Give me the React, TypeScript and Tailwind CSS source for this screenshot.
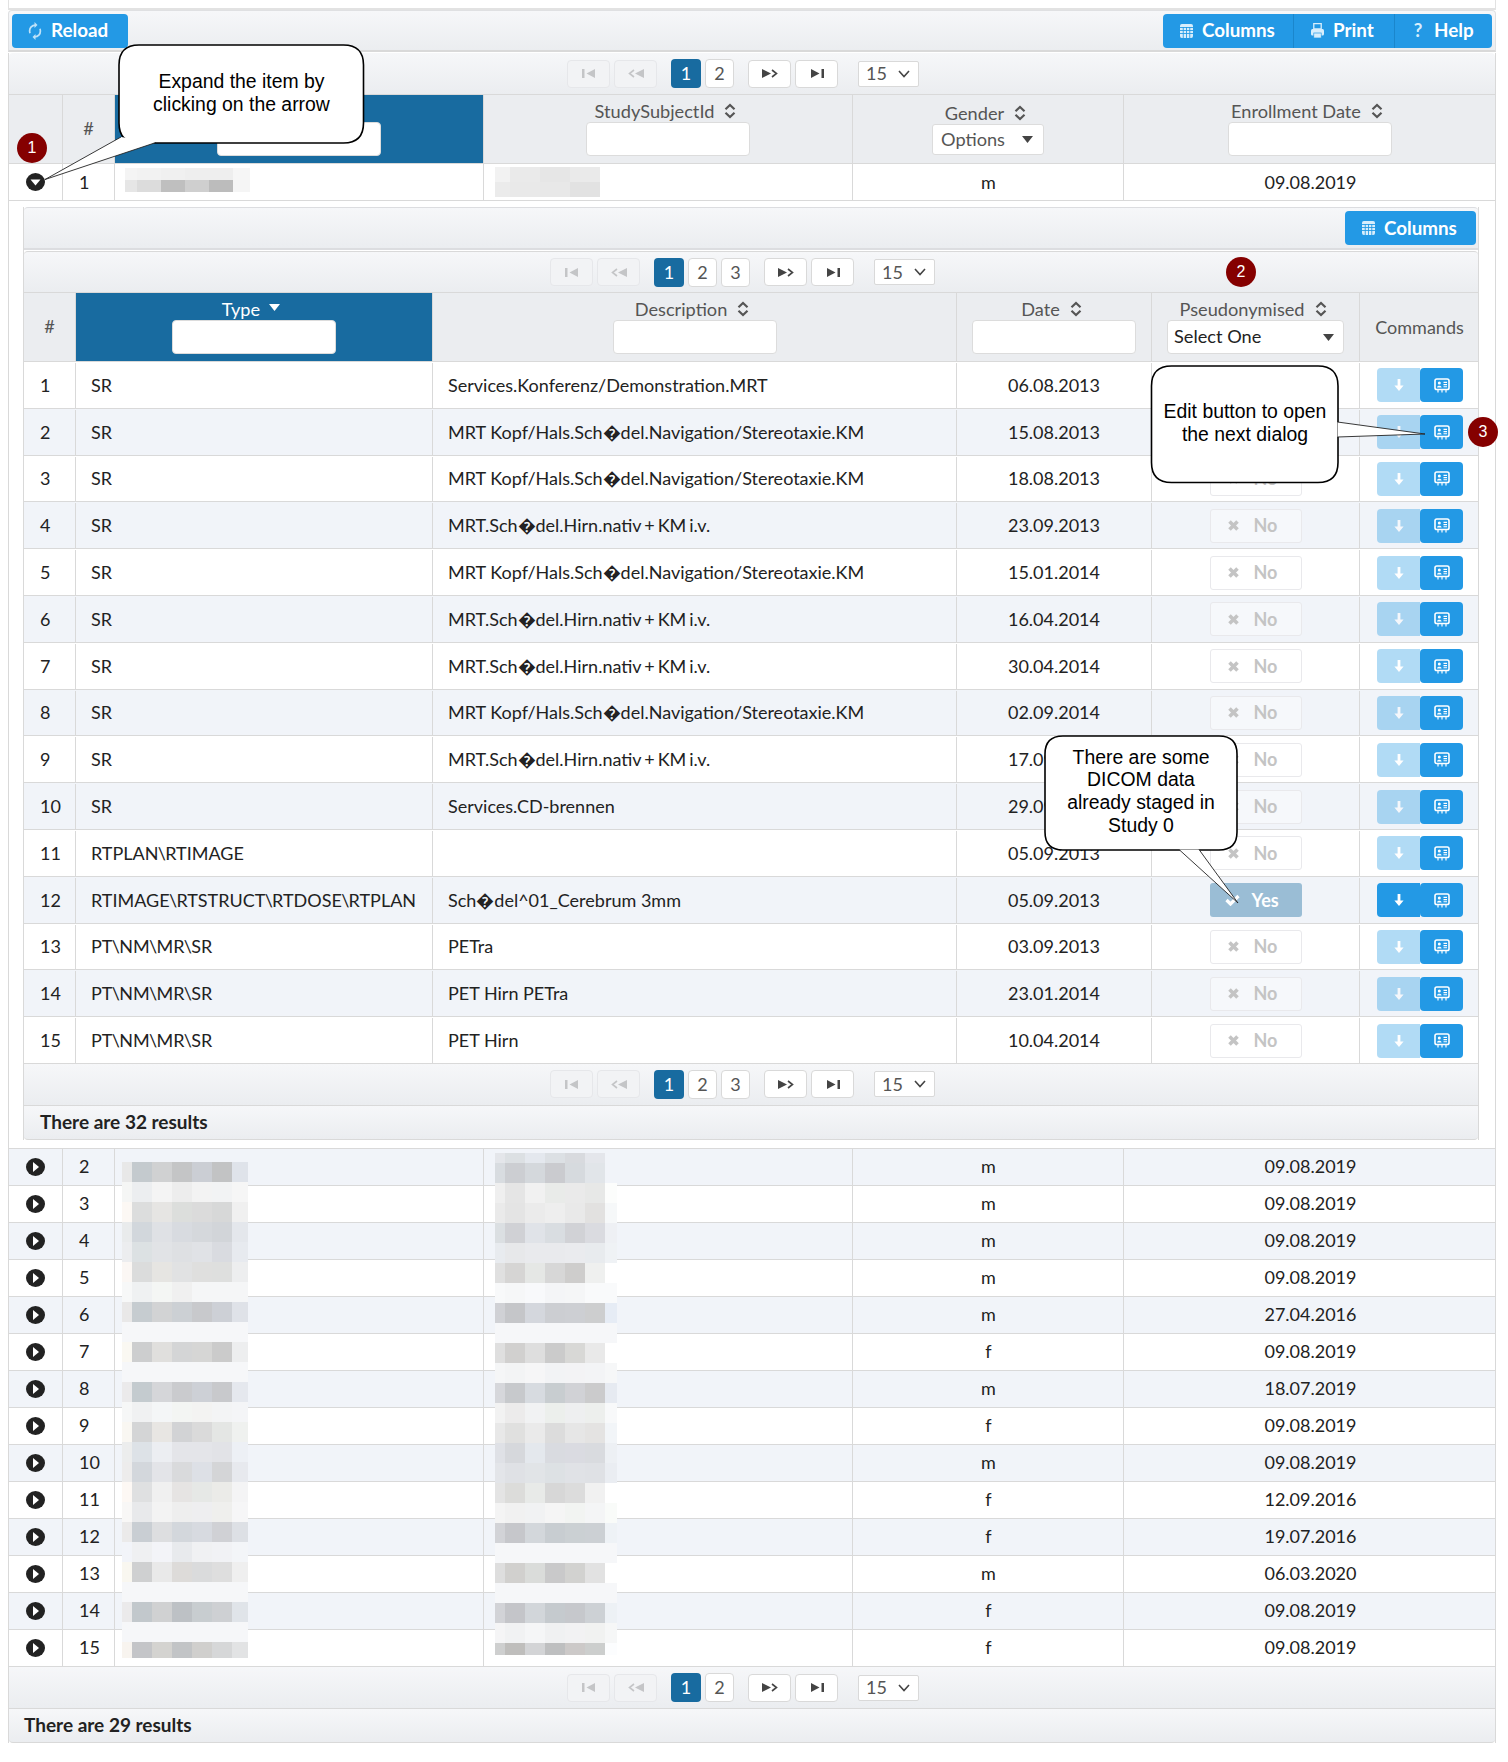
import React from "react";

const font = { fontFamily: "Lato, sans-serif" };

const Sort = () => (
  <svg width="12" height="16" viewBox="0 0 12 16" className="ml-[10px] shrink-0" fill="none" stroke="#555" strokeWidth="2.2">
    <path d="M1.5 6.2 L6 2 L10.5 6.2" />
    <path d="M1.5 9.8 L6 14 L10.5 9.8" />
  </svg>
);

const Caret = ({ color = "#555" }: { color?: string }) => (
  <svg width="11" height="7" viewBox="0 0 11 7" className="shrink-0"><path d="M0 0 H11 L5.5 7 Z" fill={color} /></svg>
);

const IconFirst = ({ c }: { c: string }) => (
  <svg width="14" height="9" viewBox="0 0 14 9"><rect x="0" y="0" width="2.5" height="9" fill={c} /><path d="M13 0 V9 L4.5 4.5 Z" fill={c} /></svg>
);
const IconPrev = ({ c }: { c: string }) => (
  <svg width="16" height="9" viewBox="0 0 16 9"><path d="M6 1 L1.5 4.5 L6 8" stroke={c} strokeWidth="1.6" fill="none" /><path d="M16 0 V9 L7 4.5 Z" fill={c} /></svg>
);
const IconNext = ({ c }: { c: string }) => (
  <svg width="16" height="9" viewBox="0 0 16 9"><path d="M0 0 V9 L9 4.5 Z" fill={c} /><path d="M10 1 L14.5 4.5 L10 8" stroke={c} strokeWidth="1.6" fill="none" /></svg>
);
const IconLast = ({ c }: { c: string }) => (
  <svg width="14" height="9" viewBox="0 0 14 9"><path d="M1 0 V9 L9.5 4.5 Z" fill={c} /><rect x="11.5" y="0" width="2.5" height="9" fill={c} /></svg>
);

const NavBtn = ({ children, disabled }: { children: React.ReactNode; disabled?: boolean }) => (
  <div className={`w-[43px] h-[28px] rounded-[4px] border flex items-center justify-center ${disabled ? "border-[#e6e7ea] bg-[#f2f3f5]" : "border-[#d9d9d9] bg-white"}`}>
    {children}
  </div>
);

const Pager = ({ pages, pr = "pr-[18px]" }: { pages: number; pr?: string }) => (
  <div className={`flex items-center justify-center h-full ${pr}`}>
    <div className="flex gap-[4px]">
      <NavBtn disabled><IconFirst c="#c4c5c7" /></NavBtn>
      <NavBtn disabled><IconPrev c="#c4c5c7" /></NavBtn>
    </div>
    <div className="flex gap-[4px] ml-[14px]">
      {Array.from({ length: pages }, (_, i) => (
        <div key={i} className={`h-[29px] rounded-[4px] flex items-center justify-center text-[18px] ${i === 0 ? "w-[30px] bg-[#186ba0] text-white" : "w-[29px] bg-white border border-[#d9d9d9] text-[#555]"}`}>
          {i + 1}
        </div>
      ))}
    </div>
    <div className="flex gap-[4px] ml-[14px]">
      <NavBtn><IconNext c="#444" /></NavBtn>
      <NavBtn><IconLast c="#444" /></NavBtn>
    </div>
    <div className="ml-[20px] w-[61px] h-[26px] bg-white border border-[#d9d9d9] rounded-[2px] flex items-center pl-[7px] text-[18px] text-[#555]">
      15
      <svg width="12" height="8" viewBox="0 0 12 8" className="ml-[11px]" fill="none" stroke="#444" strokeWidth="1.6"><path d="M1 1 L6 6.5 L11 1" /></svg>
    </div>
  </div>
);

const IconRefresh = () => (
  <svg width="14" height="20" viewBox="0 0 14 18" preserveAspectRatio="none" fill="none" stroke="#bfe2f8" strokeWidth="1.7">
    <path d="M2 11 C0.5 6.5 4 3.5 8 3.7" />
    <path d="M6.5 1 L9.5 3.7 L6.5 6.2" fill="#bfe2f8" stroke="none" />
    <path d="M12 7 C13.5 11.5 10 14.5 6 14.3" />
    <path d="M7.5 17 L4.5 14.3 L7.5 11.8" fill="#bfe2f8" stroke="none" />
  </svg>
);
const IconTable = () => (
  <svg width="13" height="14" viewBox="0 0 14 14" preserveAspectRatio="none">
    <rect width="14" height="14" rx="2" fill="#d8eefc" />
    <path d="M0 3.5 H14 M0 6.5 H14 M0 9.5 H14 M3.5 3 V14 M7 3 V14 M10.5 3 V14" stroke="#2399e5" strokeWidth="0.9" />
  </svg>
);
const IconPrint = () => (
  <svg width="13" height="15" viewBox="0 0 14 15" preserveAspectRatio="none">
    <path d="M3 0.5 H11 V6 H3 Z" fill="none" stroke="#d8eefc" strokeWidth="1.4" />
    <rect x="0" y="6" width="14" height="6.5" rx="1.5" fill="#d8eefc" />
    <rect x="3" y="10" width="8" height="5" fill="#d8eefc" stroke="#2399e5" strokeWidth="0.7" />
  </svg>
);

const Btn = ({ w, icon, label, cls = "" }: { w: string; icon: React.ReactNode; label: string; cls?: string }) => (
  <div className={`${w} ${cls} h-[34px] bg-[#2399e5] flex items-center pl-[16px] text-white font-bold text-[18.8px]`}>
    <span className="w-[14px] flex justify-center shrink-0">{icon}</span>
    <span className="ml-[9px]">{label}</span>
  </div>
);

const TextInput = ({ w }: { w: string }) => (
  <div className={`${w} h-[34px] bg-white border border-[#dcdcdc] rounded-[4px]`} />
);

const ArrowDown = () => (
  <svg width="10" height="12" viewBox="0 0 10 12"><path d="M3.6 0 H6.4 V6.5 H9.6 L5 12 L0.4 6.5 H3.6 Z" fill="#fff" /></svg>
);
const Contact = () => (
  <svg width="16" height="15" viewBox="0 0 16 15">
    <rect x="1" y="1" width="14" height="10.5" rx="1.8" fill="none" stroke="#fff" strokeWidth="1.6" />
    <circle cx="5.3" cy="5" r="1.5" fill="#fff" />
    <path d="M3 9.5 C3 7 7.6 7 7.6 9.5 Z" fill="#fff" />
    <path d="M9.5 4.4 H13 M9.5 6.6 H13 M9.5 8.8 H13" stroke="#fff" strokeWidth="1.1" />
    <path d="M4 11 V14.5 M8 11 V14.5 M12 11 V14.5" stroke="#fff" strokeWidth="1.2" />
  </svg>
);

const PseudoBtn = ({ yes }: { yes?: boolean }) =>
  yes ? (
    <div className="w-[92px] h-[34px] rounded-[3px] bg-[#186ba0]/40 flex items-center pl-[15px] text-white font-bold text-[18px]">
      <svg width="15" height="12" viewBox="0 0 15 12" fill="none" stroke="#fff" strokeWidth="3.2"><path d="M1.5 6 L5.5 10 L13.5 2" /></svg>
      <span className="ml-[12px]">Yes</span>
    </div>
  ) : (
    <div className="w-[92px] h-[34px] rounded-[3px] bg-white/40 border border-[#e9e9ec] flex items-center pl-[17px] text-[#c4c4c4] font-bold text-[18px]">
      <svg width="11" height="11" viewBox="0 0 11 11" stroke="#c4c4c4" strokeWidth="3.6"><path d="M1.5 1.5 L9.5 9.5 M9.5 1.5 L1.5 9.5" /></svg>
      <span className="ml-[15px]">No</span>
    </div>
  );

const nested: [string, string, string, boolean?][] = [
  ["SR", "Services.Konferenz/Demonstration.MRT", "06.08.2013"],
  ["SR", "MRT Kopf/Hals.Sch\uFFFDdel.Navigation/Stereotaxie.KM", "15.08.2013"],
  ["SR", "MRT Kopf/Hals.Sch\uFFFDdel.Navigation/Stereotaxie.KM", "18.08.2013"],
  ["SR", "MRT.Sch\uFFFDdel.Hirn.nativ + KM i.v.", "23.09.2013"],
  ["SR", "MRT Kopf/Hals.Sch\uFFFDdel.Navigation/Stereotaxie.KM", "15.01.2014"],
  ["SR", "MRT.Sch\uFFFDdel.Hirn.nativ + KM i.v.", "16.04.2014"],
  ["SR", "MRT.Sch\uFFFDdel.Hirn.nativ + KM i.v.", "30.04.2014"],
  ["SR", "MRT Kopf/Hals.Sch\uFFFDdel.Navigation/Stereotaxie.KM", "02.09.2014"],
  ["SR", "MRT.Sch\uFFFDdel.Hirn.nativ + KM i.v.", "17.09.2014"],
  ["SR", "Services.CD-brennen", "29.09.2014"],
  ["RTPLAN\\RTIMAGE", "", "05.09.2013"],
  ["RTIMAGE\\RTSTRUCT\\RTDOSE\\RTPLAN", "Sch\uFFFDdel^01_Cerebrum 3mm", "05.09.2013", true],
  ["PT\\NM\\MR\\SR", "PETra", "03.09.2013"],
  ["PT\\NM\\MR\\SR", "PET Hirn PETra", "23.01.2014"],
  ["PT\\NM\\MR\\SR", "PET Hirn", "10.04.2014"],
];

const outer: [string, string][] = [
  ["m", "09.08.2019"], ["m", "09.08.2019"], ["m", "09.08.2019"], ["m", "09.08.2019"], ["m", "27.04.2016"],
  ["f", "09.08.2019"], ["m", "18.07.2019"], ["f", "09.08.2019"], ["m", "09.08.2019"], ["f", "12.09.2016"],
  ["f", "19.07.2016"], ["m", "06.03.2020"], ["f", "09.08.2019"], ["f", "09.08.2019"],
];

const Toggler = ({ down }: { down?: boolean }) => (
  <svg width="19" height="18" viewBox="0 0 19 18">
    <ellipse cx="9.5" cy="9" rx="9.5" ry="9" fill="#222" />
    {down ? <path d="M4.5 6.5 H14.5 L9.5 12.5 Z" fill="#fff" /> : <path d="M7 4 L13 9 L7 14 Z" fill="#fff" />}
  </svg>
);

const OUTER_COLS = "grid grid-cols-[54px_52px_369px_369px_271px_1fr]";
const NEST_COLS = "grid grid-cols-[52px_357px_524px_195px_208px_1fr]";
const hCell = "border-r border-[#d9d9d9] flex flex-col items-center justify-end pb-[7px] text-[#555] text-[18.2px]";
const hLabelBase = "flex items-center leading-[20px] mb-[1px]";
const hLabel = `${hLabelBase} pr-[5px]`;
const bCell = "border-r border-[#d9d9d9] flex items-center";

const OuterRow = ({ n, g, d, down, alt }: { n: number; g: string; d: string; down?: boolean; alt?: boolean }) => (
  <div className={`${OUTER_COLS} h-[37px] border-b border-[#d9d9d9] text-[18px] text-[#222] ${alt ? "bg-[#f1f4f9]" : "bg-white"}`}>
    <div className={`${bCell} pl-[17px]`}><Toggler down={down} /></div>
    <div className={`${bCell} pl-[16px] ${down ? "" : "pb-[1px]"}`}>{n}</div>
    <div className={bCell} />
    <div className={bCell} />
    <div className={`${bCell} justify-center pl-[1px] ${down ? "" : "pb-[1px]"}`}>{g}</div>
    <div className={`flex items-center justify-center pl-[2px] ${down ? "" : "pb-[1px]"}`}>{d}</div>
  </div>
);

const TypeText = ({ text }: { text: string }) => (
  <span>
    {text.split("\\").map((part, i) => (
      <React.Fragment key={i}>
        {i > 0 && <span className="mx-[-0.7px]">\</span>}
        {part}
      </React.Fragment>
    ))}
  </span>
);

const Badge = ({ n, x, y }: { n: number; x: string; y: string }) => (
  <div
    className={`absolute ${x} ${y} w-[30px] h-[30px] rounded-full bg-[#850000] text-white text-[16px] flex items-center justify-center`}
    style={{ fontFamily: '"Liberation Sans", sans-serif' }}
  >
    {n}
  </div>
);

const Note = ({ cls, children }: { cls: string; children: React.ReactNode }) => (
  <div
    className={`absolute ${cls} flex items-center justify-center text-center text-black text-[19.4px] leading-[22.7px]`}
    style={{ fontFamily: '"Liberation Sans", sans-serif' }}
  >
    <div>{children}</div>
  </div>
);

const boxPath = (x: number, y: number, w: number, h: number, r: number) =>
  `M${x + r} ${y} H${x + w - r} Q${x + w} ${y} ${x + w} ${y + r} V${y + h - r} Q${x + w} ${y + h} ${x + w - r} ${y + h} H${x + r} Q${x} ${y + h} ${x} ${y + h - r} V${y + r} Q${x} ${y} ${x + r} ${y} Z`;

const Bubble = ({ x, y, w, h, r, a, b, t }: { x: number; y: number; w: number; h: number; r: number; a: number[]; b: number[]; t: number[] }) => (
  <g>
    <path d={boxPath(x, y, w, h, r)} fill="#fff" stroke="#000" strokeWidth="1.6" />
    <polygon points={`${a[0]},${a[1]} ${t[0]},${t[1]} ${b[0]},${b[1]}`} fill="#fff" />
    <path d={`M${a[0]} ${a[1]} L${t[0]} ${t[1]} L${b[0]} ${b[1]}`} fill="none" stroke="#222" strokeWidth="0.9" />
  </g>
);

const N = "f6f7f9";
const nameRows: string[] = [
  "e8e8e8 c4cace d0d1d2 c4c5c6 cbced4 c2c3c4 dfe3ea",
  "f5f6f5 eceef0 f4f4f4 ededed f3f3f3 f2f3f4 f6f6f6",
  "fcf8f4 dcdddd e6e5e3 dcdedc dbdbdb d7d8d8 f0f0f0",
  "e9ebec d2d7dc dfe1e5 d8dbe0 d5d8dc d2d5d9 e4e7ec",
  "ecedef dce1e3 e1e3e6 dee0e3 e0e2e6 d9dbe0 e7eaef",
  "fbf7f4 dbdcdc e6e5e2 e1e2e3 dfdfde dedfde edeeef",
  "f7f8f8 eff1f2 f4f6f4 f0f0f0 f5f6f7 f5f6f7 f5f6f7",
  "e9e8e8 c6ccd0 d2d3d4 ccd0d4 c8c9cc cdd0d6 dfe2e8",
  `${N} ${N} ${N} ${N} ${N} ${N} ${N}`,
  "faf8f2 cdcecf e0dfdd d4d5d6 d6d6d5 cbcbcb edeeef",
  `${N} ${N} ${N} ${N} ${N} ${N} ${N}`,
  "ebeaeb c4cbcf d5d6d9 cacbce cdd0d6 c8c9cc e5e8ee",
  "f6f7f7 f0f1f2 f4f6f7 f3f5f3 f3f3f2 f3f4f5 f4f5f7",
  "f9f7f2 d4d5d6 e8e6e3 d2d3d5 dadada e4e6e4 eff1ef",
  "eceded dde2e7 eceef2 e4e5e9 e4e5e9 e2e3e7 edf0f5",
  "edecec d3d7dc e3e4e8 d9dadc dde0e6 d4d5d7 e7e9ee",
  "fdf8f4 dfe0e1 f0f0f0 e6e4e3 e6e8e6 ebebe8 f4f4f5",
  "f8f7f6 e8e9eb f3f3f3 eeeeee eeeef0 efefed f6f6f7",
  "ebeaea c9ced3 dddee0 d3d7dc d7dae0 d0d1d5 dde0e5",
  "f2f4f9 eff0f2 f3f4f8 e8eaed f0f1f3 f1f2f5 f3f5f8",
  "f9f7f0 cfd0d1 e9e9e9 dddbd9 dadbdc dedede efefef",
  `${N} ${N} ${N} ${N} ${N} ${N} ${N}`,
  "ebeaeb c2c8cc d0d1d2 bdc1c5 c8cdd0 ced0d3 e0e4e9",
  `${N} ${N} ${N} ${N} ${N} ${N} ${N}`,
  "f8f4ef c4c5c8 d4d3d0 c2c4c6 d0cfcd d6d7d8 e2e3e4",
];
const idRows: string[] = [
  "e4e6ea dce0e3 e4e8ee dce0e4 d8dade e4e6eb -",
  "d8dce0 ccced2 d4d8dc cacbcf d6dade e1e5e9 -",
  "efefef e5e5e5 f1f1f1 e9ebe9 eaeaea e7e8e7 fcfdfc",
  "eaeaea e4e4e4 ebebeb eeeeee e9e9e9 e2e1e0 f6f8f9",
  "dbdfe2 d0d1d5 e0e3e8 d9dde1 d1d2d6 dadbe0 eef0f4",
  "e8ebef e7e8ea e9eaed e9eaed eaebee e8ebee eff2f5",
  "e0e0e0 d6d5d4 e5e7e5 d7d7d7 cecdcc eff0ef -",
  "f8f9fa f6f7f8 f8f9fb f4f5f7 f5f6f7 f9fafb f9fafb",
  "d0d1d5 c5c6c9 d4d7dd ccced2 cdcfd3 cdcecf e6ecf5",
  `${N} ${N} ${N} ${N} ${N} ${N} ${N}`,
  "dfdfdf d1d0cf dedede cbcbcb d8d8d6 e9e9e9 -",
  "f5f6f7 f3f4f5 f6f6f7 f2f3f5 f3f3f5 f3f4f6 f6f7f8",
  "d6d7db c7c9cc d7dbe0 c8cdd0 d1d2d6 cbcbcc e6eaf1",
  "f2f2f2 ecebeb f1f2f3 ecefec eeeff0 edefed f8f9fa",
  "e8e8e8 e0e0df eaeaea dcdcdc e6e6e6 e4e3e2 f2f5f8",
  "dfe1e6 d6d8dc e4e8ed d9dbe0 dadbe1 d9dbdf edf0f4",
  "e3e5e9 dfe1e5 e1e4e7 dde1e4 e0e2e6 dfe1e5 eaedf2",
  "e4e4e4 dcdcda e8eae8 d7d7d7 dcdcdc f1f1f1 -",
  "f4f4f4 f1f1f1 f1f2f3 f5f5f5 f2f4f2 f4f5f6 f9fbf9",
  "d2d3d7 c6c7cb d3d7db c8cdd1 cbd0d3 ccd0d4 eef2f6",
  `${N} ${N} ${N} ${N} ${N} ${N} ${N}`,
  "dedede d1d0ce dadcda c9c9ca d2d2d0 e2e2e2 -",
  `${N} ${N} ${N} ${N} ${N} ${N} ${N}`,
  "d2d3d7 c4c5c9 d2d6da c5cace c6c8cc cdd1d5 edf1f5",
  "f5f5f6 f1f2f3 f5f6f7 f0f1f2 f2f2f3 f1f2f1 f6f7f7",
  "cecfcf bfbebc d3d4d6 bebfc0 ccc9c8 cccecd fcfdfe",
];

const Mosaic = ({ xs, rows, y, rowH, firstH, lastH }: { xs: number[]; rows: string[]; y: number; rowH: number; firstH?: number; lastH?: number }) => {
  const out: React.ReactNode[] = [];
  let cy = y;
  rows.forEach((row, r) => {
    let h = rowH;
    if (r === 0 && firstH) h = firstH;
    if (r === rows.length - 1 && lastH) h = lastH;
    row.split(" ").forEach((c, i) => {
      if (c !== "-") out.push(<rect key={`${r}-${i}`} x={xs[i]} y={cy} width={xs[i + 1] - xs[i]} height={h} fill={`#${c}`} />);
    });
    cy += h;
  });
  return <g shapeRendering="crispEdges">{out}</g>;
};

export default function App() {
  return (
    <div className="relative w-[1508px] h-[1762px] bg-white overflow-hidden" style={font}>
      <div className="ml-[8px] w-[1488px] h-[10px] border-x border-b-2 border-[#e2e2e2]" />

      {/* toolbar */}
      <div className="ml-[8px] w-[1488px] h-[42px] rounded-t-[4px] border border-[#dfe0e2] border-b-2 border-b-[#d9d9d9] bg-linear-to-b from-[#f6f7f9] to-[#ebedf0] flex items-center justify-between pl-[3px] pr-[3px]">
        <Btn w="w-[116px]" cls="rounded-[4px]" icon={<IconRefresh />} label="Reload" />
        <div className="flex gap-[0px]">
          <Btn w="w-[131px]" cls="rounded-l-[4px] border-r border-[#1a86cc]" icon={<IconTable />} label="Columns" />
          <Btn w="w-[101px]" cls="border-r border-[#1a86cc]" icon={<IconPrint />} label="Print" />
          <Btn w="w-[97px]" cls="rounded-r-[4px]" icon={<span className="text-[#d8eefc]">?</span>} label="Help" />
        </div>
      </div>

      {/* outer table */}
      <div className="ml-[8px] w-[1488px] border-x border-[#d9d9d9]">
        <div className="h-[42px] mt-[1px] border-b border-[#d9d9d9] rounded-t-[4px] bg-linear-to-b from-[#f6f7f9] to-[#ebedf0]">
          <Pager pages={2} />
        </div>
        <div className={`${OUTER_COLS} h-[69px] border-b border-[#d9d9d9] bg-[#ebedf0]`}>
          <div className={hCell} />
          <div className={`${hCell} !justify-center !pb-0`}>#</div>
          <div className={`${hCell} bg-[#186ba0] pr-[1px]`}><TextInput w="w-[164px]" /></div>
          <div className={hCell}>
            <div className={hLabel}>StudySubjectId<Sort /></div>
            <TextInput w="w-[164px]" />
          </div>
          <div className={`${hCell} !pb-[8px]`}>
            <div className={hLabel}>Gender<Sort /></div>
            <div className="w-[112px] h-[31px] bg-white border border-[#dcdcdc] rounded-[3px] flex items-center justify-between pl-[8px] pr-[10px]">
              Options<Caret color="#444" />
            </div>
          </div>
          <div className={`${hCell} !border-r-0`}>
            <div className={hLabel}>Enrollment Date<Sort /></div>
            <TextInput w="w-[164px]" />
          </div>
        </div>
        <OuterRow n={1} g="m" d="09.08.2019" down />

        {/* nested */}
        <div className="h-[947px] pt-[6px] pl-[14px]">
          <div className="w-[1456px] border-x border-[#d9d9d9]">
            <div className="h-[43px] rounded-t-[4px] border-t border-b-2 border-[#dcdde0] bg-linear-to-b from-[#f6f7f9] to-[#ebedf0] flex items-center justify-end pr-[2px]">
              <Btn w="w-[131px]" cls="rounded-[4px]" icon={<IconTable />} label="Columns" />
            </div>
            <div className="h-[42px] mt-[1px] border-t border-b border-[#d9d9d9] rounded-t-[4px] bg-linear-to-b from-[#f6f7f9] to-[#ebedf0]">
              <Pager pages={3} pr="pr-[17px]" />
            </div>
            <div className={`${NEST_COLS} h-[69px] border-b border-[#d9d9d9] bg-[#ebedf0]`}>
              <div className={`${hCell} !justify-center !pb-0`}>#</div>
              <div className={`${hCell} bg-[#186ba0] pr-[1px] !text-white`}>
                <div className={`${hLabelBase} pr-[5px]`}>Type<span className="ml-[9px] mb-[3px]"><Caret color="#fff" /></span></div>
                <TextInput w="w-[164px]" />
              </div>
              <div className={hCell}>
                <div className={hLabel}>Description<Sort /></div>
                <TextInput w="w-[164px]" />
              </div>
              <div className={hCell}>
                <div className={hLabel}>Date<Sort /></div>
                <TextInput w="w-[164px]" />
              </div>
              <div className={hCell}>
                <div className={hLabel}>Pseudonymised<Sort /></div>
                <div className="w-[177px] h-[34px] bg-white border border-[#dcdcdc] rounded-[4px] flex items-center justify-between pl-[6px] pr-[9px] text-[#222]">
                  Select One<Caret color="#444" />
                </div>
              </div>
              <div className="flex items-center justify-center text-[#555] text-[18px] pl-[1px]">Commands</div>
            </div>
            {nested.map(([type, desc, date, yes], i) => (
              <div key={i} className={`${NEST_COLS} h-[46.8px] pt-[1px] border-b border-[#d9d9d9] text-[18px] text-[#222] ${i % 2 ? "bg-[#f1f4f9]" : "bg-white"}`}>
                <div className={`${bCell} pl-[16px]`}>{i + 1}</div>
                <div className={`${bCell} pl-[15px] whitespace-nowrap`}><TypeText text={type} /></div>
                <div className={`${bCell} pl-[15px] whitespace-nowrap ${desc.includes("+") ? "[word-spacing:-1.6px]" : ""}`}>{desc}</div>
                <div className={`${bCell} justify-center`}>{date}</div>
                <div className={`${bCell} justify-center`}><PseudoBtn yes={yes} /></div>
                <div className="flex items-center justify-center pl-[2px]">
                  <div className={`w-[43px] h-[34px] rounded-l-[4px] bg-[#2399e5] flex items-center justify-center ${yes ? "" : "opacity-35"}`}><ArrowDown /></div>
                  <div className="w-[43px] h-[34px] rounded-[4px] bg-[#2399e5] flex items-center justify-center"><Contact /></div>
                </div>
              </div>
            ))}
            <div className="h-[42px] border-b border-[#d9d9d9] bg-linear-to-b from-[#f6f7f9] to-[#ebedf0]">
              <Pager pages={3} pr="pr-[17px]" />
            </div>
            <div className="h-[34px] border-b border-[#d9d9d9] rounded-b-[4px] bg-linear-to-b from-[#f6f7f9] to-[#ebedf0] flex items-center pl-[16px] text-[19px] font-bold text-[#222]">
              There are 32 results
            </div>
          </div>
        </div>

        <div className="border-t border-[#d9d9d9]">
          {outer.map(([g, d], i) => (
            <OuterRow key={i} n={i + 2} g={g} d={d} alt={i % 2 === 0} />
          ))}
        </div>
        <div className="h-[42px] border-b border-[#d9d9d9] bg-linear-to-b from-[#f6f7f9] to-[#ebedf0]">
          <Pager pages={2} />
        </div>
        <div className="h-[34px] border-b border-[#d9d9d9] rounded-b-[4px] bg-linear-to-b from-[#f6f7f9] to-[#ebedf0] flex items-center pl-[15px] text-[19px] font-bold text-[#222]">
          There are 29 results
        </div>
      </div>

      {/* overlay drawing: censored patches and speech bubbles */}
      <svg className="absolute top-0 left-0 pointer-events-none" width="1508" height="1762" viewBox="0 0 1508 1762">
        <Mosaic xs={[125, 137, 161, 185, 209, 233, 250]} y={168} rowH={12} rows={["f4f4f4 f2f2f2 f0f0f0 eeeeee eeeeee f6f6f6", "e6e6e6 dcdcdc bfbfbf cfcfcf bcbcbc f5f5f5"]} />
        <Mosaic xs={[495, 510, 540, 570, 600]} y={167} rowH={15} rows={["f2f2f2 eaeaea e6e6e6 eaeaea", "ebebeb e9e9e9 e8e8e8 e2e2e2"]} />
        <Mosaic xs={[122, 132, 152, 172, 192, 212, 232, 248]} y={1162} rowH={20} lastH={16} rows={nameRows} />
        <Mosaic xs={[495, 505, 525, 545, 565, 585, 605, 617]} y={1153} rowH={20} firstH={10} lastH={12} rows={idRows} />
        <Bubble x={119} y={45} w={244.5} h={98} r={20} a={[121, 137]} b={[156, 142.5]} t={[45, 179.5]} />
        <Bubble x={1151.5} y={366} w={186.5} h={116.5} r={20} a={[1337.5, 422]} b={[1337.5, 437]} t={[1425, 434]} />
        <Bubble x={1045} y={736} w={192} h={114} r={18} a={[1179, 849.5]} b={[1199, 849.5]} t={[1238, 903]} />
      </svg>

      <Note cls="top-[45px] left-[119px] w-[245px] h-[95px]">Expand the item by<br />clicking on the arrow</Note>
      <Note cls="top-[366px] left-[1152px] w-[186px] h-[114px]">Edit button to open<br />the next dialog</Note>
      <Note cls="top-[736px] left-[1045px] w-[192px] h-[110px]">There are some<br />DICOM data<br />already staged in<br />Study 0</Note>

      <Badge n={1} x="left-[17px]" y="top-[133px]" />
      <Badge n={2} x="left-[1226px]" y="top-[257px]" />
      <Badge n={3} x="left-[1468px]" y="top-[417px]" />
    </div>
  );
}
